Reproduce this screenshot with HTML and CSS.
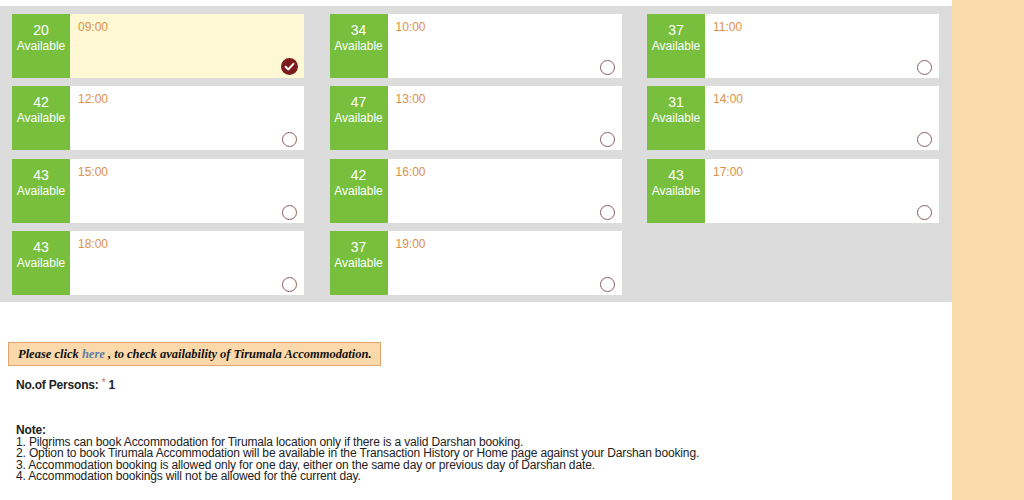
FILE: index.html
```html
<!DOCTYPE html>
<html>
<head>
<meta charset="utf-8">
<link rel="stylesheet" href="styles.css">
</head>
<body>
<div class="page">
  <div class="main">
    <div class="slots">
      <div class="slot selected"><div class="avail"><span class="num">20</span><span class="lbl">Available</span></div><div class="info"><span class="time">09:00</span><span class="check"><svg width="17" height="17" viewBox="0 0 17 17"><circle cx="8.5" cy="8.5" r="8.5" fill="#7c1a1e"/><path d="M4.6 8.8 L7.4 11.4 L12.4 5.8" fill="none" stroke="#fff" stroke-width="2" stroke-linecap="round" stroke-linejoin="round"/></svg></span></div></div>
      <div class="slot"><div class="avail"><span class="num">34</span><span class="lbl">Available</span></div><div class="info"><span class="time">10:00</span><span class="radio"></span></div></div>
      <div class="slot"><div class="avail"><span class="num">37</span><span class="lbl">Available</span></div><div class="info"><span class="time">11:00</span><span class="radio"></span></div></div>
      <div class="slot"><div class="avail"><span class="num">42</span><span class="lbl">Available</span></div><div class="info"><span class="time">12:00</span><span class="radio"></span></div></div>
      <div class="slot"><div class="avail"><span class="num">47</span><span class="lbl">Available</span></div><div class="info"><span class="time">13:00</span><span class="radio"></span></div></div>
      <div class="slot"><div class="avail"><span class="num">31</span><span class="lbl">Available</span></div><div class="info"><span class="time">14:00</span><span class="radio"></span></div></div>
      <div class="slot"><div class="avail"><span class="num">43</span><span class="lbl">Available</span></div><div class="info"><span class="time">15:00</span><span class="radio"></span></div></div>
      <div class="slot"><div class="avail"><span class="num">42</span><span class="lbl">Available</span></div><div class="info"><span class="time">16:00</span><span class="radio"></span></div></div>
      <div class="slot"><div class="avail"><span class="num">43</span><span class="lbl">Available</span></div><div class="info"><span class="time">17:00</span><span class="radio"></span></div></div>
      <div class="slot"><div class="avail"><span class="num">43</span><span class="lbl">Available</span></div><div class="info"><span class="time">18:00</span><span class="radio"></span></div></div>
      <div class="slot"><div class="avail"><span class="num">37</span><span class="lbl">Available</span></div><div class="info"><span class="time">19:00</span><span class="radio"></span></div></div>
    </div>
    <div class="banner">Please click <a href="#">here</a> , to check availability of Tirumala Accommodation.</div>
    <div class="persons">No.of Persons: <sup class="req">*</sup> 1</div>
    <div class="note">
      <div class="note-title">Note:</div>
      <div>1. Pilgrims can book Accommodation for Tirumala location only if there is a valid Darshan booking.</div>
      <div>2. Option to book Tirumala Accommodation will be available in the Transaction History or Home page against your Darshan booking.</div>
      <div>3. Accommodation booking is allowed only for one day, either on the same day or previous day of Darshan date.</div>
      <div>4. Accommodation bookings will not be allowed for the current day.</div>
    </div>
  </div>
  <div class="side"></div>
</div>
</body>
</html>
```
FILE: styles.css
```css
html, body {
  margin: 0;
  padding: 0;
  background: #ffffff;
  font-family: "Liberation Sans", Arial, sans-serif;
}
.page {
  display: flex;
  width: 1024px;
  height: 500px;
  overflow: hidden;
}
.main {
  width: 952px;
  flex: none;
}
.side {
  flex: 1;
  background: #fadba9;
}
.slots {
  margin-top: 6px;
  background: #dcdcdc;
  padding: 8px 13px 7px 12px;
  display: grid;
  grid-template-columns: repeat(3, 1fr);
  column-gap: 25.5px;
  row-gap: 8.4px;
}
.slot {
  height: 64px;
  display: flex;
  background: #ffffff;
}
.slot.selected {
  background: #fff8d5;
}
.avail {
  width: 58px;
  flex: none;
  background: #77bf3c;
  color: #ffffff;
  display: flex;
  flex-direction: column;
  align-items: center;
  padding-top: 8px;
  box-sizing: border-box;
}
.num {
  font-size: 14px;
  line-height: 16px;
}
.lbl {
  font-size: 12px;
  line-height: 16px;
}
.info {
  flex: 1;
  display: flex;
  justify-content: space-between;
  padding: 6px 7px 2px 8px;
}
.time {
  color: #de9048;
  font-size: 12px;
  line-height: 14px;
}
.radio {
  align-self: flex-end;
  width: 13px;
  height: 13px;
  border: 1.6px solid #8a5c5e;
  border-radius: 50%;
  margin-bottom: 1px;
}
.check {
  align-self: flex-end;
  line-height: 0;
  margin-bottom: 1px;
  margin-right: -1px;
}
.banner {
  margin: 40px 0 0 8px;
  width: 373px;
  height: 24px;
  box-sizing: border-box;
  background: #fcd9aa;
  border: 1px solid #e3a36d;
  font-family: "Liberation Serif", "Times New Roman", serif;
  font-weight: bold;
  font-style: italic;
  font-size: 12.5px;
  line-height: 22px;
  color: #111;
  padding-left: 9px;
  white-space: nowrap;
}
.banner a {
  color: #5b80a9;
  text-decoration: none;
}
.persons {
  margin: 12px 0 0 16px;
  font-size: 12px;
  font-weight: bold;
  color: #222;
  line-height: 14px;
  letter-spacing: -0.2px;
}
.req {
  color: #c46a6a;
  font-weight: normal;
  font-size: 10px;
  vertical-align: 3px;
  line-height: 0;
}
.note {
  margin: 33px 0 0 16px;
  font-size: 12px;
  line-height: 11.5px;
  letter-spacing: -0.14px;
  color: #222;
}
.note-title {
  font-weight: bold;
}
```
